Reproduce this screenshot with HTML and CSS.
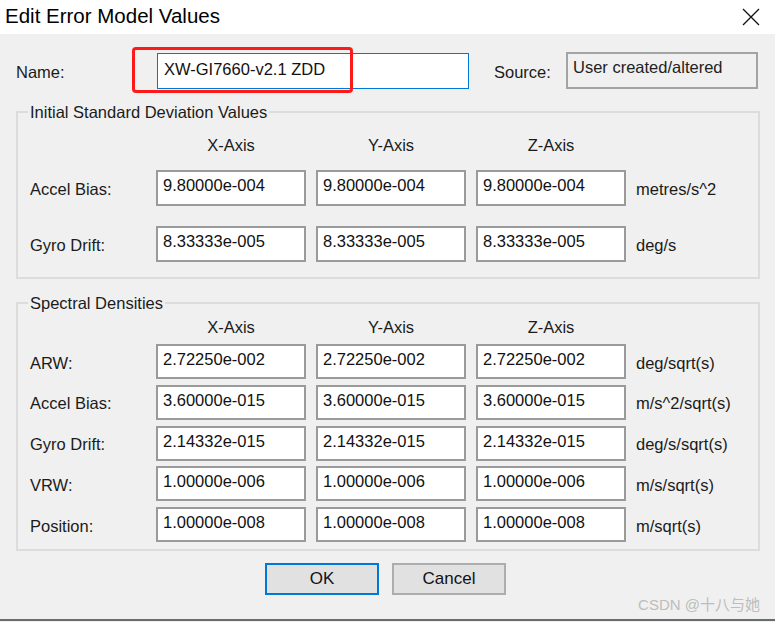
FILE: index.html
```html
<!DOCTYPE html>
<html>
<head>
<meta charset="utf-8">
<link rel="stylesheet" href="styles.css">
</head>
<body>
<div class="window">
  <div class="titlebar">
    <span class="title">Edit Error Model Values</span>
    <svg class="close" width="18" height="18" viewBox="0 0 18 18"><path d="M1 1 L17 17 M17 1 L1 17" stroke="#111" stroke-width="1.3" fill="none"/></svg>
  </div>
  <div class="main">
    <div class="name-row">
      <span class="lbl name-lbl">Name:</span>
      <div class="name-field">XW-GI7660-v2.1 ZDD</div>
      <span class="lbl source-lbl">Source:</span>
      <div class="source-field">User created/altered</div>
    </div>

    <fieldset class="group g1">
      <legend>Initial Standard Deviation Values</legend>
      <div class="grid grid1">
        <span></span><span class="hdr">X-Axis</span><span class="hdr">Y-Axis</span><span class="hdr">Z-Axis</span><span></span>
        <span class="lbl">Accel Bias:</span>
        <div class="field">9.80000e-004</div><div class="field">9.80000e-004</div><div class="field">9.80000e-004</div>
        <span class="lbl unit">metres/s^2</span>
        <span class="lbl">Gyro Drift:</span>
        <div class="field">8.33333e-005</div><div class="field">8.33333e-005</div><div class="field">8.33333e-005</div>
        <span class="lbl unit">deg/s</span>
      </div>
    </fieldset>

    <fieldset class="group g2">
      <legend>Spectral Densities</legend>
      <div class="grid grid2">
        <span></span><span class="hdr">X-Axis</span><span class="hdr">Y-Axis</span><span class="hdr">Z-Axis</span><span></span>
        <span class="lbl">ARW:</span>
        <div class="field">2.72250e-002</div><div class="field">2.72250e-002</div><div class="field">2.72250e-002</div>
        <span class="lbl unit">deg/sqrt(s)</span>
        <span class="lbl">Accel Bias:</span>
        <div class="field">3.60000e-015</div><div class="field">3.60000e-015</div><div class="field">3.60000e-015</div>
        <span class="lbl unit">m/s^2/sqrt(s)</span>
        <span class="lbl">Gyro Drift:</span>
        <div class="field">2.14332e-015</div><div class="field">2.14332e-015</div><div class="field">2.14332e-015</div>
        <span class="lbl unit">deg/s/sqrt(s)</span>
        <span class="lbl">VRW:</span>
        <div class="field">1.00000e-006</div><div class="field">1.00000e-006</div><div class="field">1.00000e-006</div>
        <span class="lbl unit">m/s/sqrt(s)</span>
        <span class="lbl">Position:</span>
        <div class="field">1.00000e-008</div><div class="field">1.00000e-008</div><div class="field">1.00000e-008</div>
        <span class="lbl unit">m/sqrt(s)</span>
      </div>
    </fieldset>

    <div class="buttons">
      <div class="btn btn-ok">OK</div>
      <div class="btn">Cancel</div>
    </div>
  </div>
  <div class="bottom-line"></div>
  <div class="highlight"></div>
  <div class="watermark">CSDN @十八与她</div>
</div>
</body>
</html>
```

FILE: styles.css
```css
* { box-sizing: border-box; }
html, body { margin: 0; padding: 0; }
body {
  font-family: "Liberation Sans", Arial, "Noto Sans CJK SC", sans-serif;
  font-size: 16.5px;
  color: #1b1b1b;
  background: #f0f0f0;
}
.window {
  position: relative;
  width: 775px;
  height: 622px;
  display: flex;
  flex-direction: column;
  background: #f0f0f0;
}
.titlebar {
  height: 34px;
  flex: none;
  background: #ffffff;
  display: flex;
  align-items: center;
  justify-content: space-between;
  padding: 0 15px 3px 5px;
}
.title {
  font-size: 20.5px;
  color: #000;
}
.close { margin-top: 2px; }
.main {
  flex: 1;
  padding: 18px 0 0 16px;
}
.lbl { line-height: 18px; white-space: nowrap; }
.name-row {
  display: flex;
  align-items: center;
  height: 37px;
}
.name-lbl { width: 141px; margin-top: 2px; }
.name-field {
  width: 312px;
  height: 36px;
  margin-top: 1px;
  border: 1px solid #0078d7;
  background: #fff;
  padding: 6px 0 0 6px;
  line-height: 18px;
  color: #111;
}
.source-lbl { margin-left: 25px; width: 72px; margin-top: 2px; }
.source-field {
  width: 192px;
  height: 37px;
  border: 2px solid #a3a3a3;
  background: #f0f0f0;
  padding: 4px 0 0 5px;
  line-height: 18px;
  color: #222;
}
.group {
  margin: 14px 0 0 0;
  width: 744px;
  border: 2px solid #dcdcdc;
  padding: 0 12px;
  min-width: 0;
}
.group legend {
  padding: 0 2px;
  margin-left: -2px;
  line-height: 18px;
  font-size: 16.5px;
}
.g1 { padding-top: 15px; padding-bottom: 15px; }
.g2 { margin-top: 15px; padding-top: 6px; padding-bottom: 7px; }
.grid {
  display: grid;
  grid-template-columns: 116px 150px 150px 150px auto;
  column-gap: 10px;
  align-items: center;
}
.hdr { text-align: center; line-height: 18px; }
.grid1 {
  grid-template-rows: 14px 36px 36px;
  row-gap: 20px;
}
.grid1 .hdr { position: relative; top: 2px; }
.grid2 {
  grid-template-rows: 20.25px 35px 35px 35px 35px 35px;
  row-gap: 5.75px;
}
.grid2 .hdr { position: relative; top: -1px; }
.grid > span.lbl { margin-top: 2px; }
.field {
  height: 100%;
  border: 2px solid #9a9a9a;
  background: #fff;
  padding: 4px 0 0 5px;
  line-height: 18px;
  color: #111;
  white-space: nowrap;
}
.grid2 .field { padding-top: 4px; }
.buttons {
  display: flex;
  gap: 13px;
  margin: 12px 0 0 249px;
}
.btn {
  width: 114px;
  height: 32px;
  border: 2px solid #adadad;
  background: #e1e1e1;
  display: flex;
  align-items: center;
  justify-content: center;
  color: #111;
  font-size: 17px;
}
.btn-ok { border-color: #0078d7; }
.bottom-line {
  flex: none;
  height: 3px;
  border-top: 2px solid #6b6b6b;
  background: #f0f0f0;
}
.highlight {
  position: absolute;
  left: 132px;
  top: 47px;
  width: 221px;
  height: 46px;
  border: 3px solid #ff1a1a;
  border-radius: 4px;
  pointer-events: none;
}
.watermark {
  position: absolute;
  right: 15px;
  bottom: 8px;
  font-size: 15px;
  color: #bdbdbd;
  line-height: 18px;
}
```
